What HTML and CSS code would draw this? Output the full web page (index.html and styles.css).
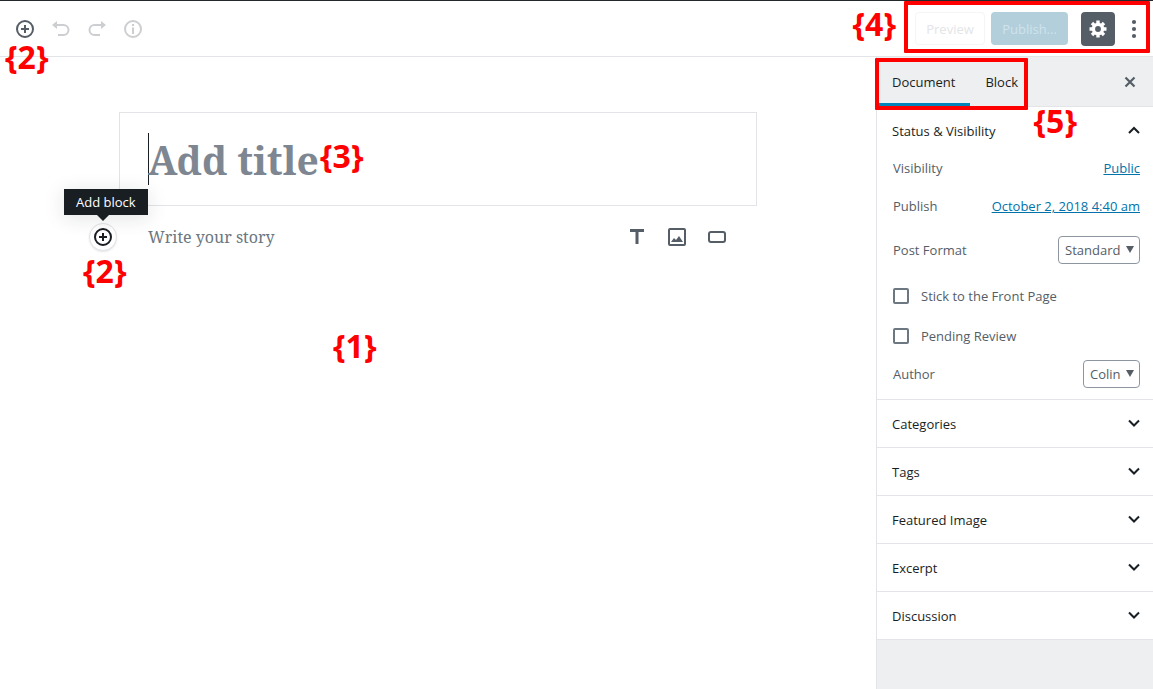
FILE: index.html
```html
<!DOCTYPE html>
<html lang="en">
<head>
<meta charset="utf-8">
<title>Add New Post</title>
<link rel="stylesheet" href="styles.css">
</head>
<body>
<div class="app">
  <header class="toolbar">
    <div class="tools">
      <button class="icon-btn" aria-label="Add block"><svg width="20" height="20" viewBox="0 0 20 20" fill="none" stroke="currentColor" stroke-width="2"><circle cx="10" cy="10" r="8"/><path d="M10 6v8M6 10h8"/></svg></button>
      <button class="icon-btn" aria-label="Undo" disabled><svg width="20" height="20" viewBox="0 0 20 20"><path fill="currentColor" d="M1 6l5-4v8z"/><path d="M5 6h7.500a4.500 4.500 0 0 1 0 10H7" fill="none" stroke="currentColor" stroke-width="2"/></svg></button>
      <button class="icon-btn" aria-label="Redo" disabled><svg width="20" height="20" viewBox="0 0 20 20"><path fill="currentColor" d="M19 6l-5-4v8z"/><path d="M15 6H7.500a4.500 4.500 0 0 0 0 10H13" fill="none" stroke="currentColor" stroke-width="2"/></svg></button>
      <button class="icon-btn" aria-label="Content structure" disabled><svg width="20" height="20" viewBox="0 0 20 20" fill="none" stroke="currentColor" stroke-width="2"><circle cx="10" cy="10" r="8"/><path d="M10 5v2M10 8.500v6.500"/></svg></button>
    </div>
    <div class="actions">
      <button class="btn btn-preview" disabled>Preview</button>
      <button class="btn btn-publish" disabled>Publish...</button>
      <button class="settings" aria-label="Settings"><svg width="20" height="20" viewBox="0 0 20 20"><circle cx="10" cy="10" r="4.600" fill="none" stroke="currentColor" stroke-width="3.400"/><path d="M10 1.500v3M10 15.500v3M1.500 10h3M15.500 10h3M4 4l2.100 2.100M13.900 13.900L16 16M16 4l-2.100 2.100M6.100 13.900L4 16" stroke="currentColor" stroke-width="3.400"/></svg></button>
      <button class="more" aria-label="More"><svg width="6" height="20" viewBox="0 0 6 20" fill="currentColor"><circle cx="3" cy="3" r="2.100"/><circle cx="3" cy="10" r="2.100"/><circle cx="3" cy="17" r="2.100"/></svg></button>
    </div>
  </header>

  <main class="editor">
    <div class="canvas">
      <div class="title-box"><span class="caret"></span><input class="title" type="text" placeholder="Add title" aria-label="Add title"></div>
      <div class="story-row">
        <div class="inserter">
          <span class="tooltip" role="tooltip">Add block</span>
          <button class="add" aria-label="Add block"><svg width="20" height="20" viewBox="0 0 20 20" fill="none" stroke="currentColor" stroke-width="2"><circle cx="10" cy="10" r="8"/><path d="M10 6v8M6 10h8"/></svg></button>
        </div>
        <input class="story" type="text" placeholder="Write your story" aria-label="Write your story">
        <div class="shortcuts">
          <button class="icon-btn" aria-label="Paragraph"><svg width="20" height="20" viewBox="0 0 20 20" fill="currentColor"><path d="M3 2h14v3h-5.500v12h-3V5H3z"/></svg></button>
          <button class="icon-btn" aria-label="Image"><svg width="20" height="20" viewBox="0 0 20 20"><rect x="2" y="2" width="16" height="16" rx="1" fill="none" stroke="currentColor" stroke-width="2"/><path fill="currentColor" d="M4 15l3-4 2 2 3-4 4 6z"/></svg></button>
          <button class="icon-btn" aria-label="Button"><svg width="20" height="20" viewBox="0 0 20 20"><rect x="2" y="5" width="16" height="10" rx="2" fill="none" stroke="currentColor" stroke-width="2"/></svg></button>
        </div>
      </div>
    </div>
  </main>

  <aside class="sidebar">
    <div class="tabs">
      <button class="tab active">Document</button>
      <button class="tab">Block</button>
      <button class="close" aria-label="Close settings"><svg width="12" height="12" viewBox="0 0 12 12" stroke="currentColor" stroke-width="2.200"><path d="M1.500 1.500l9 9M10.500 1.500l-9 9"/></svg></button>
    </div>
    <section class="panel">
      <button class="panel-head">Status &amp; Visibility<svg class="chev" width="12" height="8" viewBox="0 0 12 8"><path d="M1 7l5-5 5 5"/></svg></button>
      <div class="panel-body">
        <div class="row"><span>Visibility</span><a href="#">Public</a></div>
        <div class="row"><span>Publish</span><a href="#">October 2, 2018 4:40 am</a></div>
        <div class="row row-select"><label for="format">Post Format</label><span class="select"><select id="format"><option>Standard</option></select></span></div>
        <div class="check"><input type="checkbox" id="stick"><label for="stick">Stick to the Front Page</label></div>
        <div class="check"><input type="checkbox" id="pending"><label for="pending">Pending Review</label></div>
        <div class="row"><label for="author">Author</label><span class="select"><select id="author"><option>Colin</option></select></span></div>
      </div>
    </section>
    <section class="panel"><button class="panel-head">Categories<svg class="chev" width="12" height="8" viewBox="0 0 12 8"><path d="M1 1.500l5 5 5-5"/></svg></button></section>
    <section class="panel"><button class="panel-head">Tags<svg class="chev" width="12" height="8" viewBox="0 0 12 8"><path d="M1 1.500l5 5 5-5"/></svg></button></section>
    <section class="panel"><button class="panel-head">Featured Image<svg class="chev" width="12" height="8" viewBox="0 0 12 8"><path d="M1 1.500l5 5 5-5"/></svg></button></section>
    <section class="panel"><button class="panel-head">Excerpt<svg class="chev" width="12" height="8" viewBox="0 0 12 8"><path d="M1 1.500l5 5 5-5"/></svg></button></section>
    <section class="panel"><button class="panel-head">Discussion<svg class="chev" width="12" height="8" viewBox="0 0 12 8"><path d="M1 1.500l5 5 5-5"/></svg></button></section>
  </aside>

  <div class="frame frame-actions"></div>
  <div class="frame frame-tabs"></div>
  <span class="mark mark-canvas">{1}</span>
  <span class="mark mark-toolbar-add">{2}</span>
  <span class="mark mark-inline-add">{2}</span>
  <span class="mark mark-title">{3}</span>
  <span class="mark mark-actions">{4}</span>
  <span class="mark mark-tabs">{5}</span>
</div>
</body>
</html>
```
FILE: styles.css
```css
* { box-sizing: border-box; }
body {
  margin: 0;
  background: #fff;
  color: #555d66;
  font: 13px/20px "Open Sans", "Noto Sans", sans-serif;
}
button, input, select { font: inherit; color: inherit; margin: 0; }
button { border: 0; background: none; padding: 0; display: flex; align-items: center; justify-content: center; }
svg { display: block; flex: none; }

.app {
  position: relative;
  min-height: 100vh;
  border-top: 1px solid #23282d;
  display: grid;
  grid-template: auto 1fr / minmax(0, 1fr) 277px;
}

.toolbar {
  grid-column: 1 / -1;
  height: 56px;
  border-bottom: 1px solid #e2e4e7;
  display: flex;
  align-items: center;
  justify-content: space-between;
  padding: 0 16px 0 7px;
}
.tools { display: flex; }
.icon-btn { width: 36px; height: 36px; color: #555d66; }
.icon-btn:disabled { color: #ccced1; }
.actions { display: flex; align-items: center; }
.btn { height: 33px; border-radius: 4px; padding: 0 12px; }
.btn-preview { width: 70px; border: 1px solid #f5f5f5; color: #e3e5e7; margin-right: 6px; }
.btn-publish { width: 77px; background: #b2cfdb; color: #d0e3eb; margin-right: 13px; }
.settings { width: 34px; height: 34px; border-radius: 4px; background: #555d66; color: #fff; margin-right: 16px; }
.more { color: #555d66; }

.editor { padding: 55px 16px 0; }
.canvas { max-width: 638px; margin: 0 auto; }
.title-box { border: 1px solid #e2e4e7; padding: 20px 28px; display: flex; align-items: center; }
.caret { width: 1px; height: 52px; margin-right: -1px; background: #191e23; }
.title, .story {
  border: 0;
  outline: 0;
  padding: 0;
  background: none;
  min-width: 0;
  flex: 1;
  font-family: "Noto Serif", "DejaVu Serif Condensed", "DejaVu Serif", serif;
}
.title { font-size: 39px; font-weight: 700; height: 52px; }
.title::placeholder { color: #7e8791; opacity: 1; }
.story { font-size: 16px; height: 28px; }
.story::placeholder { color: #6c7781; opacity: 1; }
.story-row { position: relative; display: flex; align-items: center; padding: 13px 22px 0 29px; }
.shortcuts { display: flex; gap: 4px; }
.inserter { position: absolute; left: -30px; bottom: 4px; }
.add { width: 28px; height: 28px; border-radius: 50%; border: 1px solid #e2e4e7; background: #fff; color: #191e23; box-shadow: 0 1px 2px #0000001a; }
.tooltip {
  position: absolute;
  bottom: 36px;
  left: -25px;
  background: #191e23;
  color: #fff;
  padding: 3px 12px;
  white-space: nowrap;
  box-shadow: 0 3px 20px #191e2320;
}
.tooltip::after {
  content: "";
  position: absolute;
  top: 100%;
  left: 33px;
  border: 6px solid transparent;
  border-top-color: #191e23;
}

.sidebar { border-left: 1px solid #e2e4e7; background: #edeff0; }
.tabs { display: flex; height: 50px; border-bottom: 1px solid #e2e4e7; color: #191e23; padding-right: 17px; }
.tab { padding: 0 15px; border-bottom: 3px solid transparent; padding-top: 3px; }
.tab.active { font-weight: 500; border-bottom-color: #0085ba; }
.close { margin-left: auto; color: #555d66; }

.panel { background: #fff; border-bottom: 1px solid #e2e4e7; }
.panel-head { width: 100%; height: 47px; padding: 0 13px 0 15px; justify-content: space-between; font-weight: 500; color: #191e23; }
.chev { fill: none; stroke: #191e23; stroke-width: 2; margin-bottom: 2px; }
.panel-body { padding: 0 13px 11px 16px; }
.row { display: flex; align-items: center; justify-content: space-between; height: 28px; margin-bottom: 10px; }
.row-select { margin: 16px 0 22px; }
.row:last-child { margin: 0; }
.row a { color: #0073aa; }
.check { display: flex; align-items: center; gap: 12px; height: 20px; margin-bottom: 14px; }
.check + .check { margin-top: 20px; }
.check input { appearance: none; width: 16px; height: 16px; border: 2px solid #6c7781; border-radius: 2px; }
.select { position: relative; display: flex; }
.select select { appearance: none; height: 28px; border: 1px solid #8d96a0; border-radius: 4px; background: #fff; padding: 0 18px 0 6px; }
.select::after {
  content: "";
  position: absolute;
  right: 6px;
  top: 10px;
  border: solid transparent;
  border-width: 7px 4px 0;
  border-top-color: #555d66;
  pointer-events: none;
}

.frame { position: absolute; border: 4px solid #f00; border-radius: 1px; pointer-events: none; }
.frame-actions { top: 0; right: 3px; width: 246px; height: 52px; }
.frame-tabs { top: 57px; right: 125px; width: 153px; height: 52px; }
.mark { position: absolute; color: #f00; font-family: "Noto Sans", sans-serif; font-size: 32px; line-height: 36px; font-weight: 700; pointer-events: none; }
.mark-canvas { left: 333px; top: 327px; }
.mark-toolbar-add { left: 5px; top: 38px; }
.mark-inline-add { left: 83px; top: 252px; }
.mark-title { left: 320px; top: 137px; }
.mark-actions { right: 257px; top: 5px; }
.mark-tabs { right: 76px; top: 102px; }
```
